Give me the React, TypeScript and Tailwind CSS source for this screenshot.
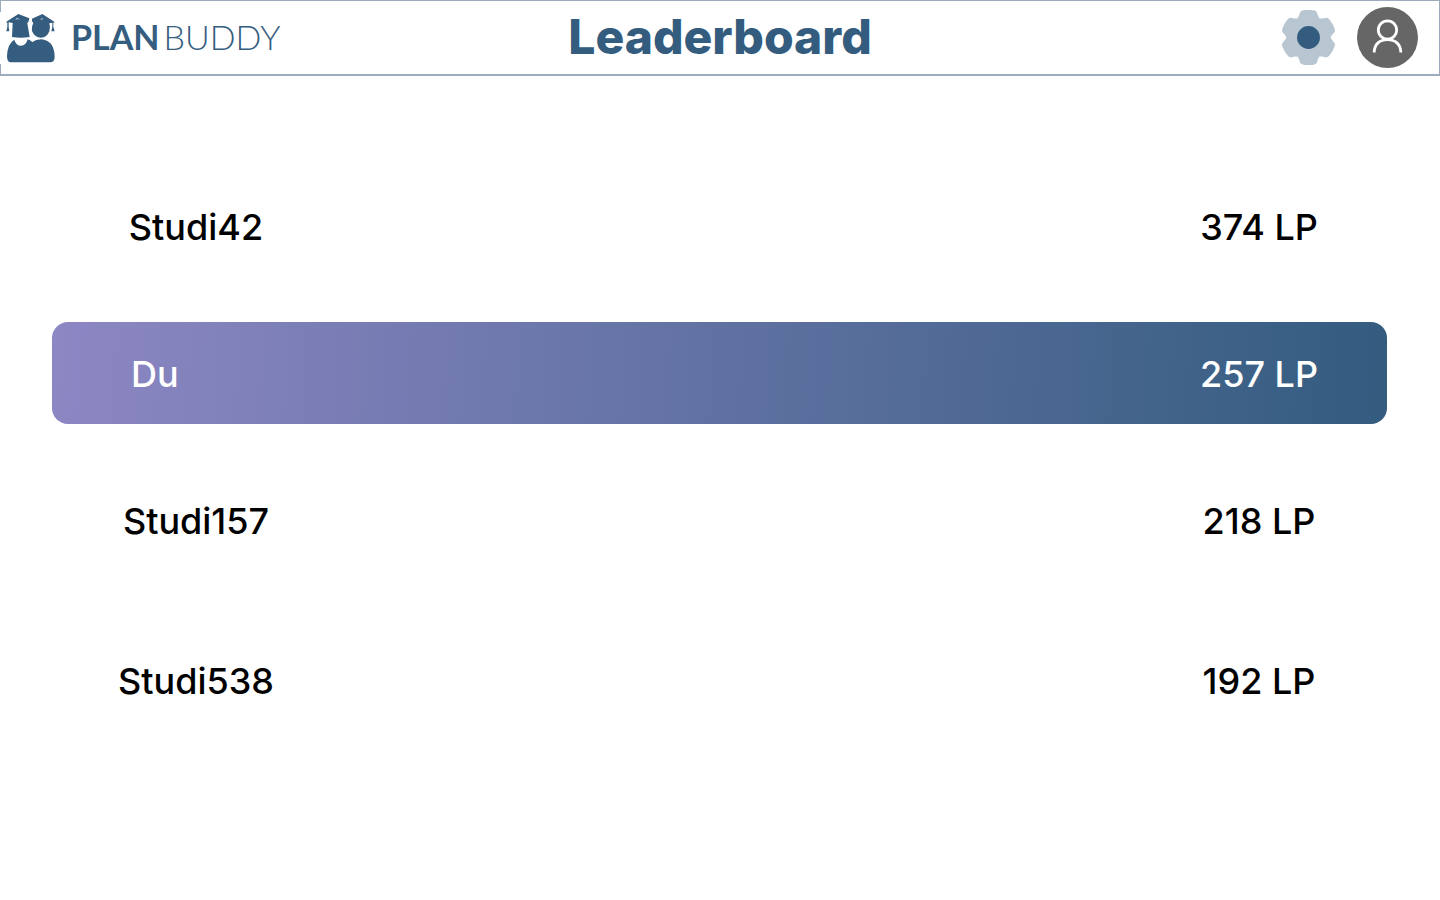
import React from "react";

type Entry = { name: string; points: number; self?: boolean; spacing: string };

const entries: Entry[] = [
  { name: "Studi42", points: 374, spacing: "" },
  { name: "Du", points: 257, self: true, spacing: "mt-11" },
  { name: "Studi157", points: 218, spacing: "mt-[46px]" },
  { name: "Studi538", points: 192, spacing: "mt-[58px]" },
];

const toothAngles = [0, 60, 120, 180, 240, 300];

function LogoMark() {
  return (
    <svg viewBox="0 0 150 150" className="h-[50px] w-[50px]" fill="#355d80" aria-hidden="true">
      <path d="M0 27 L37 3 L70 16 L68 25 L64 31 L71 72 Q44 77 18 72 L20 30 L8 28 L8 42 L10 55 H1 L4 41 V29 Z" />
      <path d="M78 17 L109 3 L146 27 L142 29 V41 L146 55 H136 L139 42 V29 L130 31 Q134 43 130 55 Q123 74 105 74 Q86 73 79 56 Q75 44 82 30 L78 25 Z" />
      <path d="M15 148 Q3 148 3 130 Q4 92 25 80 Q30 98 45 98 Q60 98 65 79 Q72 81 79 87 Q90 79 105 79 Q145 82 146 131 Q146 148 132 148 Z" />
      <path d="M28 80 Q45 84 62 80 Q59 94 45 95 Q32 94 28 80 Z" fill="#fff" />
      <path d="M29 19 L36 16 L40 20 M104 19 L111 17" fill="none" stroke="#c3d0dc" strokeWidth="3" />
    </svg>
  );
}

function GearIcon() {
  return (
    <svg viewBox="-84 -84 168 168" className="h-[55px] w-[55px]" aria-hidden="true">
      <g fill="#b8c6d2">
        <circle r="66" />
        {toothAngles.map((angle) => (
          <path
            key={angle}
            transform={`rotate(${angle})`}
            d="M0 0 L-34 -59 C-29 -62 -28 -72 -25 -78 Q-23 -82 -15 -83 Q0 -86 15 -83 Q23 -82 25 -78 C28 -72 29 -62 34 -59 Z"
          />
        ))}
      </g>
      <circle r="35" fill="#335c7f" />
    </svg>
  );
}

function ProfileIcon() {
  return (
    <svg viewBox="0 0 61 61" className="h-[61px] w-[61px]" fill="none" aria-hidden="true">
      <circle cx="30.5" cy="30.5" r="30.5" fill="#666" />
      <g stroke="#fff" strokeWidth="2.8">
        <circle cx="30.5" cy="23" r="9.2" />
        <path d="M17.2 45.5 C17.2 37 23 32.7 30.5 32.7 C38 32.7 43.8 37 43.8 45.5" />
      </g>
    </svg>
  );
}

export default function App() {
  return (
    <div className="min-h-screen bg-white font-['Inter',sans-serif] text-black">
      <header className="grid h-[76px] grid-cols-[1fr_auto_1fr] items-center border border-b-2 border-[#9aacbd]">
        <a href="#" aria-label="PlanBuddy" className="-ml-px flex items-center gap-[15px] justify-self-start bg-white py-px pl-1.5">
          <LogoMark />
          <span className="pb-0.5 font-['Lato',sans-serif] text-[34px] leading-[48px] text-[#355d80]">
            <span className="font-bold">PLAN</span>
            <span className="ml-1 font-light">BUDDY</span>
          </span>
        </a>
        <h1 className="pb-0.5 text-5xl leading-[60px] font-extrabold text-[#335c7f]">Leaderboard</h1>
        <div className="flex items-center gap-[21px] justify-self-end pr-[21px]">
          <button type="button" aria-label="Einstellungen">
            <GearIcon />
          </button>
          <button type="button" aria-label="Profil">
            <ProfileIcon />
          </button>
        </div>
      </header>
      <main className="pt-[100px] pr-[53px] pl-[52px]">
        <ol className="text-4xl leading-[44px] font-medium">
          {entries.map((entry) => (
            <li
              key={entry.name}
              className={`flex h-[102px] items-center justify-between rounded-2xl pr-12 pl-16 ${entry.spacing} ${
                entry.self ? "bg-linear-[94deg,#8d87c4,#335c7f] pt-0.5 text-white" : ""
              }`}
            >
              <span className={entry.self ? "w-40 pl-[15px]" : "w-40 text-center"}>{entry.name}</span>
              <span className="w-40 text-center">{entry.points} LP</span>
            </li>
          ))}
        </ol>
      </main>
    </div>
  );
}
